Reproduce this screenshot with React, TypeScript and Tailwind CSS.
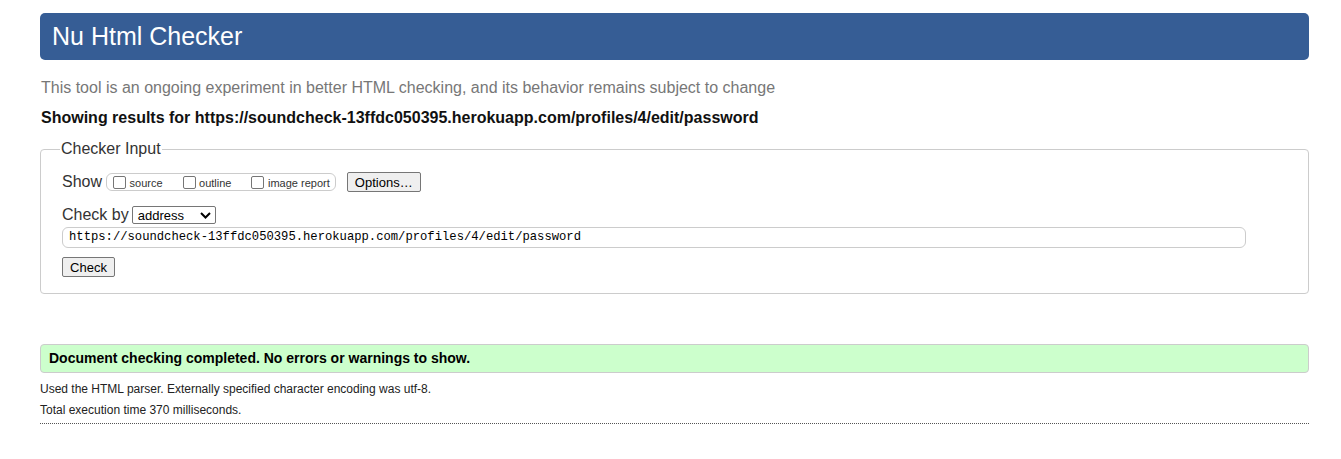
import React from 'react';

const url = "https://soundcheck-13ffdc050395.herokuapp.com/profiles/4/edit/password";

function Chevron() {
  return (
    <svg width="11" height="7" viewBox="0 0 11 7" className="shrink-0">
      <polyline points="1,1 5.5,5.5 10,1" fill="none" stroke="#000" strokeWidth="2" />
    </svg>
  );
}

function Option({ label, last = false }: { label: string; last?: boolean }) {
  return (
    <label className={`flex items-center ${last ? '' : 'mr-[20px]'}`}>
      <input
        type="checkbox"
        className="appearance-none w-[13px] h-[13px] border border-[#767676] rounded-[2px] bg-white"
      />
      <span className="ml-[3.5px] pt-[2px] text-[11px] leading-[13px] text-[#333]">{label}</span>
    </label>
  );
}

export default function App() {
  return (
    <div className="min-h-[459px] bg-white pl-[40px] pr-[32px] font-['Liberation_Sans',Arial,sans-serif] text-[#333]">
      {/* Title bar */}
      <div className="mt-[13px] h-[47px] flex items-center px-[12px] rounded-[5px] bg-[#365d95]">
        <h1 className="text-[25px] text-white font-normal">Nu Html Checker</h1>
      </div>

      <p className="mt-[19px] pl-[1px] text-[16px] leading-[18px] text-[#777]">
        This tool is an ongoing experiment in better HTML checking, and its behavior remains subject to change
      </p>
      <p className="mt-[12px] pl-[1px] text-[16px] leading-[18px] font-bold text-[#111]">
        Showing results for {url}
      </p>

      {/* Checker input form */}
      <fieldset className="mt-[13px] border border-[#ccc] rounded-[4px] pl-[21px] pt-[14px] pb-[16px]">
        <legend className="-ml-[2px] px-[1px] text-[16px] leading-[18px] text-[#333]">Checker Input</legend>

        <div className="flex items-center h-[20px]">
          <span className="text-[16px] leading-[18px]">Show</span>
          <div className="ml-[4px] h-[18px] flex items-center border border-[#ccc] rounded-[6px] pl-[6px] pr-[5px]">
            <Option label="source" />
            <Option label="outline" />
            <Option label="image report" last />
          </div>
          <button className="ml-[11px] w-[74px] h-[20px] border border-[#767676] rounded-[2px] bg-[#efefef] text-[13px] text-black leading-none">
            Options…
          </button>
        </div>

        <div className="mt-[14px] flex items-center h-[18px]">
          <span className="text-[16px] leading-[18px]">Check by</span>
          <button className="ml-[3px] w-[84px] h-[18px] flex items-center justify-between pl-[5px] pr-[4px] border border-[#767676] rounded-[2px] bg-white text-[13px] text-black leading-none">
            <span>address</span>
            <Chevron />
          </button>
        </div>

        <div className="mt-[3px] w-[1184px] h-[21px] flex items-center px-[6px] border border-[#ccc] rounded-[6px] font-['Liberation_Mono',monospace] text-[12.2px] text-black">
          {url}
        </div>

        <button className="mt-[9px] block w-[53px] h-[20px] border border-[#767676] rounded-[2px] bg-[#efefef] text-[13px] text-black leading-none">
          Check
        </button>
      </fieldset>

      {/* Result */}
      <div className="mt-[50px] h-[29px] flex items-center pl-[8px] border border-[#ccc] rounded-[4px] bg-[#ccffcc]">
        <span className="text-[14px] font-bold text-black">
          Document checking completed. No errors or warnings to show.
        </span>
      </div>

      <div className="mt-[6px] text-[12px] leading-[21px] text-[#222]">
        <p>Used the HTML parser. Externally specified character encoding was utf-8.</p>
        <p>Total execution time 370 milliseconds.</p>
      </div>
      <hr className="mt-[2px] border-0 border-t border-dotted border-[#555]" />
    </div>
  );
}
